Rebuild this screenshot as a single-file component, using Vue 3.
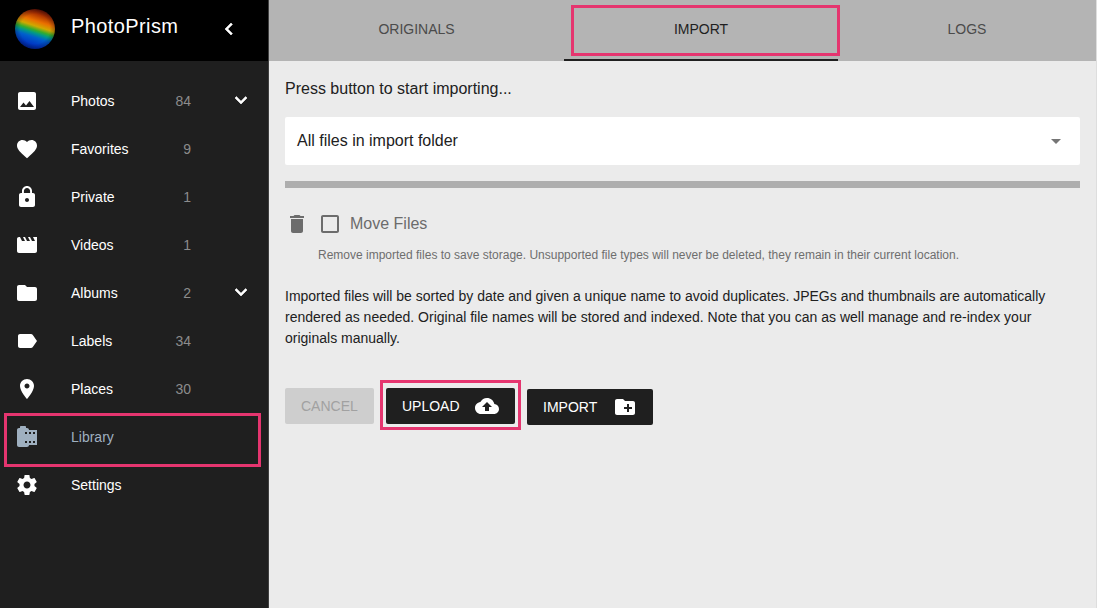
<script setup>
const icons = {
  photo: 'M21 19V5c0-1.1-.9-2-2-2H5c-1.1 0-2 .9-2 2v14c0 1.1.9 2 2 2h14c1.1 0 2-.9 2-2zM8.5 13.5l2.5 3.01L14.5 12l4.5 6H5l3.5-4.5z',
  favorite: 'M12 21.35l-1.45-1.32C5.4 15.36 2 12.28 2 8.5 2 5.42 4.42 3 7.5 3c1.74 0 3.41.81 4.5 2.09C13.09 3.81 14.76 3 16.5 3 19.58 3 22 5.42 22 8.5c0 3.78-3.4 6.86-8.55 11.54L12 21.35z',
  lock: 'M18 8h-1V6c0-2.76-2.24-5-5-5S7 3.24 7 6v2H6c-1.1 0-2 .9-2 2v10c0 1.1.9 2 2 2h12c1.1 0 2-.9 2-2V10c0-1.1-.9-2-2-2zm-6 9c-1.1 0-2-.9-2-2s.9-2 2-2 2 .9 2 2-.9 2-2 2zm3.1-9H8.9V6c0-1.71 1.39-3.1 3.1-3.1 1.71 0 3.1 1.39 3.1 3.1v2z',
  movie: 'M18 4l2 4h-3l-2-4h-2l2 4h-3l-2-4H8l2 4H7L5 4H4c-1.1 0-1.99.9-1.99 2L2 18c0 1.1.9 2 2 2h16c1.1 0 2-.9 2-2V4h-4z',
  folder: 'M10 4H4c-1.1 0-1.99.9-1.99 2L2 18c0 1.1.9 2 2 2h16c1.1 0 2-.9 2-2V8c0-1.1-.9-2-2-2h-8l-2-2z',
  label: 'M17.63 5.84C17.27 5.33 16.67 5 16 5L5 5.01C3.9 5.01 3 5.9 3 7v10c0 1.1.9 1.99 2 1.99L16 19c.67 0 1.27-.33 1.63-.84L22 12l-4.37-6.16z',
  place: 'M12 2C8.13 2 5 5.13 5 9c0 5.25 7 13 7 13s7-7.75 7-13c0-3.87-3.13-7-7-7zm0 9.5c-1.38 0-2.5-1.12-2.5-2.5s1.12-2.5 2.5-2.5 2.5 1.12 2.5 2.5-1.12 2.5-2.5 2.5z',
  roll: 'M14 5c0-1.1-.9-2-2-2h-1V2c0-.55-.45-1-1-1H6c-.55 0-1 .45-1 1v1H4c-1.1 0-2 .9-2 2v15c0 1.1.9 2 2 2h8c1.1 0 2-.9 2-2h8V5h-8zm-2 13h-2v-2h2v2zm0-9h-2V7h2v2zm4 9h-2v-2h2v2zm0-9h-2V7h2v2zm4 9h-2v-2h2v2zm0-9h-2V7h2v2z',
  settings: 'M19.43 12.98c.04-.32.07-.64.07-.98s-.03-.66-.07-.98l2.11-1.65c.19-.15.24-.42.12-.64l-2-3.46c-.12-.22-.39-.3-.61-.22l-2.49 1c-.52-.4-1.08-.73-1.69-.98l-.38-2.65C14.46 2.18 14.25 2 14 2h-4c-.25 0-.46.18-.49.42l-.38 2.65c-.61.25-1.17.59-1.69.98l-2.49-1c-.23-.09-.49 0-.61.22l-2 3.46c-.13.22-.07.49.12.64l2.11 1.65c-.04.32-.07.65-.07.98s.03.66.07.98l-2.11 1.65c-.19.15-.24.42-.12.64l2 3.46c.12.22.39.3.61.22l2.49-1c.52.4 1.08.73 1.69.98l.38 2.65c.03.24.24.42.49.42h4c.25 0 .46-.18.49-.42l.38-2.65c.61-.25 1.17-.59 1.69-.98l2.49 1c.23.09.49 0 .61-.22l2-3.46c.12-.22.07-.49-.12-.64l-2.11-1.65zM12 15.5c-1.93 0-3.5-1.57-3.5-3.5s1.57-3.5 3.5-3.5 3.5 1.57 3.5 3.5-1.57 3.5-3.5 3.5z',
  down: 'M7.41 8.59L12 13.17l4.59-4.58L18 10l-6 6-6-6z',
  left: 'M15.41 7.41L14 6l-6 6 6 6 1.41-1.41L10.83 12z',
  caret: 'M7 10l5 5 5-5z',
  trash: 'M6 19c0 1.1.9 2 2 2h8c1.1 0 2-.9 2-2V7H6v12zM19 4h-3.5l-1-1h-5l-1 1H5v2h14V4z',
  checkbox: 'M19 5v14H5V5h14m0-2H5c-1.1 0-2 .9-2 2v14c0 1.1.9 2 2 2h14c1.1 0 2-.9 2-2V5c0-1.1-.9-2-2-2z',
  cloud: 'M19.35 10.04C18.67 6.59 15.64 4 12 4 9.11 4 6.6 5.64 5.35 8.04 2.34 8.36 0 10.91 0 14c0 3.31 2.69 6 6 6h13c2.76 0 5-2.24 5-5 0-2.64-2.05-4.78-4.65-4.96zM14 13v4h-4v-4H7l5-5 5 5h-3z',
  newFolder: 'M20 6h-8l-2-2H4c-1.11 0-1.99.89-1.99 2L2 18c0 1.11.89 2 2 2h16c1.11 0 2-.89 2-2V8c0-1.11-.89-2-2-2zm-1 8h-3v3h-2v-3h-3v-2h3V9h2v3h3v2z',
}

const nav = [
  { label: 'Photos', icon: 'photo', count: 84, expandable: true },
  { label: 'Favorites', icon: 'favorite', count: 9 },
  { label: 'Private', icon: 'lock', count: 1 },
  { label: 'Videos', icon: 'movie', count: 1 },
  { label: 'Albums', icon: 'folder', count: 2, expandable: true },
  { label: 'Labels', icon: 'label', count: 34 },
  { label: 'Places', icon: 'place', count: 30 },
  { label: 'Library', icon: 'roll', active: true },
  { label: 'Settings', icon: 'settings' },
]
</script>

<template>
  <div class="app">
    <aside class="sidebar">
      <header class="brand">
        <div class="logo"></div>
        <span class="brand-name">PhotoPrism</span>
        <svg class="icon collapse" viewBox="0 0 24 24"><path :d="icons.left" /></svg>
      </header>
      <nav class="nav">
        <a v-for="item in nav" :key="item.label" class="nav-item" :class="{ active: item.active }">
          <svg class="icon" viewBox="0 0 24 24"><path :d="icons[item.icon]" /></svg>
          <span class="nav-label">{{ item.label }}</span>
          <span class="count">{{ item.count }}</span>
          <svg v-if="item.expandable" class="icon chevron" viewBox="0 0 24 24"><path :d="icons.down" /></svg>
        </a>
      </nav>
    </aside>

    <main class="main">
      <div class="tabs">
        <div class="tab originals">ORIGINALS</div>
        <div class="tab import selected">IMPORT</div>
        <div class="tab logs">LOGS</div>
      </div>
      <section class="content">
        <p class="status"><span>Press button to start importing...</span></p>
        <div class="select">
          <span>All files in import folder</span>
          <svg class="icon" viewBox="0 0 24 24"><path :d="icons.caret" /></svg>
        </div>
        <div class="progress"></div>
        <div class="option">
          <svg class="icon" viewBox="0 0 24 24"><path :d="icons.trash" /></svg>
          <svg class="icon box" viewBox="0 0 24 24"><path :d="icons.checkbox" /></svg>
          <span class="option-label">Move Files</span>
        </div>
        <p class="hint"><span>Remove imported files to save storage. Unsupported file types will never be deleted, they remain in their current location.</span></p>
        <p class="info">
          Imported files will be sorted by date and given a unique name to avoid duplicates. JPEGs and thumbnails are automatically<br />
          rendered as needed. Original file names will be stored and indexed. Note that you can as well manage and re-index your<br />
          originals manually.
        </p>
        <div class="actions">
          <button class="btn cancel">CANCEL</button>
          <div class="marked">
            <button class="btn upload">UPLOAD<svg class="icon" viewBox="0 0 24 24"><path :d="icons.cloud" /></svg></button>
          </div>
          <button class="btn import-btn">IMPORT<svg class="icon" viewBox="0 0 24 24"><path :d="icons.newFolder" /></svg></button>
        </div>
      </section>
    </main>
  </div>
</template>

<style>
body {
  margin: 0;
  overflow: hidden;
}
</style>

<style scoped>
.app {
  display: flex;
  width: 1097px;
  height: 608px;
  box-sizing: border-box;
  border-right: 1px solid #dedede;
  background: #ebebeb;
  font-family: "Liberation Sans", Arial, Helvetica, sans-serif;
  color: #212121;
  overflow: hidden;
}
.icon {
  width: 24px;
  height: 24px;
  flex: none;
  fill: currentColor;
}
.sidebar {
  width: 269px;
  flex: none;
  box-sizing: border-box;
  border-right: 1px solid #404040;
  background: #1f1f1f;
  color: #fff;
}
.brand {
  display: flex;
  align-items: center;
  height: 61px;
  box-sizing: border-box;
  padding: 0 0 4px 15px;
  background: #000;
}
.logo {
  width: 40px;
  height: 40px;
  border-radius: 50%;
  background:
    radial-gradient(circle at 50% 50%, transparent 52%, rgba(0, 0, 20, 0.3) 72%),
    linear-gradient(198deg, #5a0b00 8%, #a83000 20%, #ea7000 34%, #d0a800 44%, #35ad2c 52%, #00988a 58%, #0060cc 66%, #0038c4 80%, #001a80 96%);
}
.brand-name {
  width: 146px;
  margin-left: 16px;
  padding-bottom: 4px;
  font-size: 20px;
  letter-spacing: 0.4px;
}
.collapse,
.chevron {
  stroke: currentColor;
  stroke-width: 0.6;
}
.nav {
  padding-top: 16px;
}
.nav-item {
  display: flex;
  align-items: center;
  height: 48px;
  padding-left: 15px;
  font-size: 14px;
}
.nav-label {
  width: 80px;
  margin-left: 32px;
}
.count {
  width: 40px;
  text-align: right;
  color: #8c8c8c;
}
.chevron {
  margin-left: 38px;
  margin-top: -2px;
}
.active {
  position: relative;
  color: #9fb0c0;
}
.active::after {
  content: "";
  position: absolute;
  left: 4px;
  top: 0;
  width: 251px;
  height: 48px;
  border: 3px solid #e5356f;
}
.main {
  flex: 1;
  min-width: 0;
}
.tabs {
  display: grid;
  grid-template-columns: 295px 274px 258px;
  height: 61px;
  background: #b4b4b4;
}
.tab {
  display: flex;
  align-items: center;
  justify-content: center;
  padding-bottom: 4px;
  font-size: 14px;
  color: #4b4b4b;
}
.selected {
  position: relative;
  padding-bottom: 2px;
  border-bottom: 2px solid #1f1f1f;
  color: #1f1f1f;
}
.selected::after {
  content: "";
  position: absolute;
  left: 7px;
  top: 5px;
  width: 263px;
  height: 45px;
  border: 3px solid #e5356f;
}
.content {
  padding: 16px 16px 0;
}
p {
  margin: 0;
}
.status {
  height: 40px;
  line-height: 24px;
  font-size: 16px;
}
.select {
  display: flex;
  align-items: center;
  justify-content: space-between;
  height: 48px;
  padding: 0 12px;
  border-radius: 2px;
  background: #fff;
  font-size: 16px;
}
.select .icon {
  color: #757575;
}
.progress {
  height: 7px;
  margin-top: 16px;
  background: #aeaeae;
}
.option {
  display: flex;
  align-items: center;
  height: 24px;
  margin-top: 24px;
  font-size: 16px;
  color: #6c6c6c;
}
.box {
  margin-left: 9px;
}
.option-label {
  margin-left: 8px;
}
.hint {
  margin: 11px 0 0 33px;
  line-height: 16px;
  font-size: 12px;
  color: #6e6e6e;
  white-space: nowrap;
}
.info {
  margin-top: 23px;
  line-height: 21px;
  font-size: 14px;
  white-space: nowrap;
}
.actions {
  display: flex;
  align-items: flex-start;
  margin-top: 31px;
}
.btn {
  display: flex;
  align-items: center;
  height: 36px;
  box-sizing: border-box;
  padding: 0 16px;
  border: 0;
  border-radius: 2px;
  background: #1f1f1f;
  color: #fff;
  font: 14px "Liberation Sans", Arial, Helvetica, sans-serif;
  white-space: nowrap;
}
.btn .icon {
  margin-left: auto;
}
.cancel {
  width: 89px;
  margin-top: 8px;
  background: #cecece;
  color: #a1a1a1;
}
.marked {
  margin-left: 6px;
  padding: 5px 3px 3px;
  border: 3px solid #e5356f;
}
.upload {
  width: 129px;
}
.import-btn {
  width: 126px;
  margin-left: 6px;
  margin-top: 9px;
}
</style>
